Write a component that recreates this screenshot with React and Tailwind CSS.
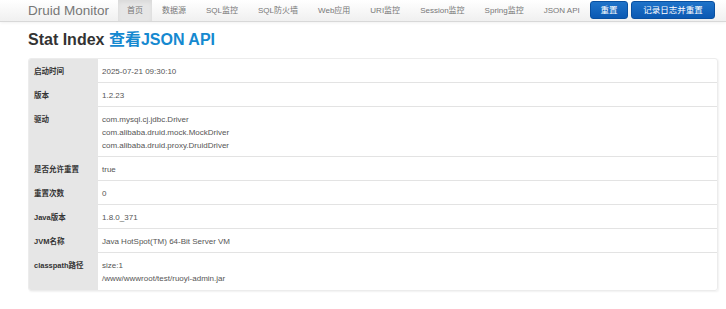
import React from 'react';

const navItems = ['首页', '数据源', 'SQL监控', 'SQL防火墙', 'Web应用', 'URI监控', 'Session监控', 'Spring监控', 'JSON API'];

const rows = [
    { label: '启动时间', values: ['2025-07-21 09:30:10'] },
    { label: '版本', values: ['1.2.23'] },
    { label: '驱动', values: ['com.mysql.cj.jdbc.Driver', 'com.alibaba.druid.mock.MockDriver', 'com.alibaba.druid.proxy.DruidDriver'] },
    { label: '是否允许重置', values: ['true'] },
    { label: '重置次数', values: ['0'] },
    { label: 'Java版本', values: ['1.8.0_371'] },
    { label: 'JVM名称', values: ['Java HotSpot(TM) 64-Bit Server VM'] },
    { label: 'classpath路径', values: ['size:1', '/www/wwwroot/test/ruoyi-admin.jar'] },
];

const App = () => {
    return (
        <div className="min-h-[309px] bg-white font-['Liberation_Sans','Noto_Sans_CJK_SC',sans-serif] text-[#333]">
            {/* Navbar */}
            <div className="h-[22px] bg-gradient-to-b from-white to-[#f0f0f0] border-b border-[#d8d8d8] shadow-[0_1px_3px_rgba(0,0,0,0.06)]">
                <div className="flex items-center h-full pl-[28px] pr-[11px]">
                    <div className="text-[13.5px] text-[#777] leading-none w-[90px]">Druid Monitor</div>
                    <div className="flex h-full">
                        {navItems.map((item, i) => (
                            <div
                                key={item}
                                className={
                                    i === 0
                                        ? 'flex items-center h-full px-[9px] text-[8px] text-[#777] bg-[#e6e6e6] shadow-[inset_0_2px_4px_rgba(0,0,0,0.06)]'
                                        : 'flex items-center h-full px-[10px] text-[8px] text-[#777]'
                                }
                            >
                                {item}
                            </div>
                        ))}
                    </div>
                    <div className="ml-auto flex gap-[3px] self-start pt-[1px]">
                        <button className="h-[18px] w-[38px] rounded-[3px] bg-gradient-to-b from-[#1f73c9] to-[#0b59b3] text-white text-[8.5px] border border-[#0a50a0]">
                            重置
                        </button>
                        <button className="h-[18px] w-[84px] rounded-[3px] bg-gradient-to-b from-[#1f73c9] to-[#0b59b3] text-white text-[8.5px] border border-[#0a50a0]">
                            记录日志并重置
                        </button>
                    </div>
                </div>
            </div>

            {/* Content */}
            <div className="pl-[28px] pr-[8px]">
                <h3 className="pt-[8px] text-[16px] font-bold leading-[20px] h-[36px]">
                    Stat Index <span className="text-[#1589d0]">查看JSON API</span>
                </h3>

                <div className="border border-[#ececec] rounded-[3px] shadow-[1px_1px_2px_rgba(0,0,0,0.06)] overflow-hidden">
                    {rows.map((row, i) => (
                        <div key={row.label} className="flex">
                            <div className="w-[69px] shrink-0 bg-[#e6e6e6] pl-[5px] pt-[6px] pb-[5px] text-[7.5px] font-bold leading-[13px] text-[#333]">
                                {row.label}
                            </div>
                            <div
                                className={
                                    i === rows.length - 1
                                        ? 'flex-1 pl-[4px] pt-[6px] pb-[5px] text-[8px] leading-[13px] text-[#555]'
                                        : 'flex-1 pl-[4px] pt-[6px] pb-[4px] text-[8px] leading-[13px] text-[#555] border-b border-[#e3e3e3]'
                                }
                            >
                                {row.values.map((v) => (
                                    <div key={v}>{v}</div>
                                ))}
                            </div>
                        </div>
                    ))}
                </div>
            </div>
        </div>
    );
};

export default App;
